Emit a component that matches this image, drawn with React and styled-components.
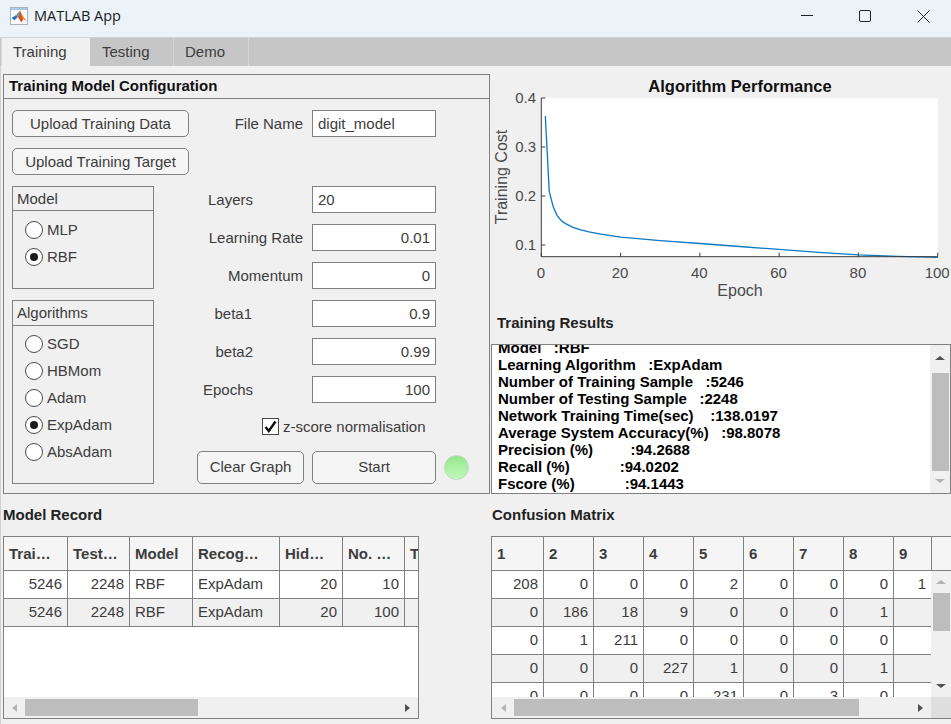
import React from 'react';
import styled, { createGlobalStyle } from 'styled-components';

const TEXT = '#3c3c3c';
const LINE = '#808080';

const GlobalStyle = createGlobalStyle`
  html, body {
    margin: 0;
    background: #f0f0f0;
    overflow: hidden;
  }
  * {
    box-sizing: border-box;
  }
`;

const Window = styled.div`
  width: 951px;
  height: 724px;
  overflow: hidden;
  display: flex;
  flex-direction: column;
  background: #f0f0f0;
  color: ${TEXT};
  font: 15px/18px 'Liberation Sans', Arial, sans-serif;
`;

const TitleBar = styled.div`
  height: 38px;
  flex: none;
  display: flex;
  align-items: center;
  padding: 0 0 5px 10px;
  background: #ecf3f8;
  border-bottom: 1px solid #d2d2d2;
`;

const AppIcon = styled.svg`
  width: 18px;
  height: 18px;
  flex: none;
`;

const AppTitle = styled.div`
  margin-left: 6px;
  flex: 1;
  color: #1a1a1a;
  font: 14.5px/18px 'Open Sans', sans-serif;
`;

const WindowButton = styled.div`
  width: 58.5px;
  height: 30px;
  display: flex;
  align-items: center;
  justify-content: center;
  &:first-of-type {
    padding-right: 2px;
  }
  &:last-child {
    margin-right: -2px;
  }
`;

const TabStrip = styled.div`
  height: 28px;
  flex: none;
  display: flex;
  background: #c6c6c6;
`;

const Tab = styled.div`
  width: ${p => p.$w}px;
  margin-left: ${p => p.$ml || 0}px;
  padding-left: ${p => p.$pl}px;
  line-height: 28px;
  background: ${p => (p.$active ? '#f0f0f0' : 'transparent')};
  border-right: ${p => (p.$active ? 'none' : '1px solid #d4d4d4')};
  border-left: ${p => (p.$active ? '1px solid #d8d8d8' : 'none')};
`;

const Content = styled.div`
  flex: 1;
  padding: 8px 0 0 3px;
  display: flex;
  flex-direction: column;
  box-shadow: inset 1px 0 #d0d0d0;
`;

const TopRow = styled.div`
  height: 420px;
  flex: none;
  display: flex;
`;

const ConfigPanel = styled.section`
  width: 487px;
  flex: none;
  border: 1px solid ${LINE};
  display: flex;
  flex-direction: column;
`;

const PanelTitle = styled.div`
  height: 24px;
  flex: none;
  padding-left: 5px;
  font-weight: bold;
  line-height: 22px;
  color: #111;
  border-bottom: 1px solid ${LINE};
`;

const ConfigBody = styled.div`
  display: flex;
  padding: 11px 0 0 8px;
`;

const LeftColumn = styled.div`
  width: 177px;
  flex: none;
  display: flex;
  flex-direction: column;
  gap: 11px;
`;

const Button = styled.div`
  width: ${p => p.$w || 177}px;
  height: ${p => p.$h || 27}px;
  padding-bottom: ${p => (p.$h ? 2 : 0)}px;
  flex: none;
  display: flex;
  align-items: center;
  justify-content: center;
  background: #f5f5f5;
  border: 1px solid ${LINE};
  border-radius: 5px;
`;

const GroupBox = styled.div`
  width: 142px;
  height: ${p => p.$h}px;
  flex: none;
  border: 1px solid ${LINE};
`;

const GroupTitle = styled.div`
  height: ${p => p.$h}px;
  padding-left: 4px;
  line-height: 23px;
  border-bottom: 1px solid ${LINE};
`;

const RadioList = styled.div`
  padding: ${p => p.$top}px 0 0 12px;
`;

const RadioRow = styled.div`
  height: 27px;
  display: flex;
  align-items: center;
  gap: 4px;
`;

const Radio = styled.span`
  width: 18px;
  height: 18px;
  flex: none;
  display: flex;
  align-items: center;
  justify-content: center;
  background: #fff;
  border: 1px solid #4a4a4a;
  border-radius: 50%;
  &::after {
    content: '';
    display: ${p => (p.$on ? 'block' : 'none')};
    width: 8px;
    height: 8px;
    border-radius: 50%;
    background: #1c1c1c;
  }
`;

const FormColumn = styled.div`
  width: 247px;
  margin-right: 8px;
  flex: none;
  display: flex;
  flex-direction: column;
  gap: 11px;
`;

const FieldRow = styled.div`
  height: 27px;
  flex: none;
  margin-bottom: ${p => p.$after || 0}px;
  display: flex;
  align-items: center;
  gap: 9px;
`;

const FieldLabel = styled.div`
  width: 114px;
  flex: none;
  text-align: right;
  padding-right: ${p => p.$inset || 0}px;
`;

const TextInput = styled.input`
  width: 124px;
  height: 27px;
  flex: none;
  padding: 0 5px;
  background: #fff;
  border: 1px solid ${LINE};
  outline: none;
  color: ${TEXT};
  font: inherit;
  text-align: ${p => (p.$num ? 'right' : 'left')};
`;

const CheckRow = styled.div`
  height: 17px;
  flex: none;
  margin: 4px 0 5px 73px;
  display: flex;
  align-items: center;
  gap: 4px;
  white-space: nowrap;
`;

const CheckBox = styled.span`
  width: 17px;
  height: 17px;
  flex: none;
  display: flex;
  align-items: center;
  justify-content: center;
  background: #fff;
  border: 1px solid #4a4a4a;
`;

const ActionRow = styled.div`
  display: flex;
  align-items: center;
  margin-left: 8px;
  gap: 8px;
`;

const Lamp = styled.div`
  width: 25px;
  height: 25px;
  flex: none;
  border-radius: 50%;
  background: linear-gradient(#8fe58a 0%, #a9f0a2 45%, #c2f8ba 100%);
  border: 1px solid #c4d6c2;
`;

const RightColumn = styled.div`
  width: 461px;
  flex: none;
  display: flex;
  flex-direction: column;
`;

const ChartSvg = styled.svg`
  width: 461px;
  height: 236px;
  flex: none;
  display: block;
  font-family: 'Liberation Sans', Arial, sans-serif;
`;

const SectionTitle = styled.div`
  height: ${p => p.$h}px;
  flex: none;
  padding-left: ${p => p.$pl || 0}px;
  padding-top: ${p => p.$pt || 0}px;
  font-weight: bold;
  color: #222;
`;

const ResultsBox = styled.div`
  margin-left: 1px;
  height: 150px;
  flex: none;
  display: flex;
  background: #fff;
  border: 1px solid ${LINE};
`;

const ResultsView = styled.div`
  flex: 1;
  overflow: hidden;
  padding-left: 6px;
`;

const ResultsText = styled.div`
  margin-top: -6px;
  color: #000;
  font-size: 15px;
  font-weight: bold;
  line-height: 17px;
  white-space: pre;
`;

const BottomRow = styled.div`
  flex: 1;
  display: flex;
`;

const TableSection = styled.section`
  width: ${p => p.$w}px;
  flex: none;
  padding-top: 12px;
`;

const TableFrame = styled.div`
  width: ${p => p.$w}px;
  height: 183px;
  display: flex;
  flex-direction: column;
  background: #fff;
  border: 1px solid ${LINE};
`;

const HeaderRow = styled.div`
  height: 34px;
  flex: none;
  display: grid;
  grid-template-columns: ${p => p.$cols};
  background: #f5f5f5;
  border-bottom: 1px solid ${LINE};
  overflow: hidden;
`;

const HeaderCell = styled.div`
  padding-left: 5px;
  line-height: 34px;
  font-weight: bold;
  white-space: nowrap;
  overflow: hidden;
  border-right: 1px solid ${LINE};
  &:last-child {
    border-right: none;
  }
`;

const TableMiddle = styled.div`
  flex: 1;
  min-height: 0;
  display: flex;
`;

const RowsView = styled.div`
  flex: 1;
  min-width: 0;
  overflow: hidden;
`;

const DataRow = styled.div`
  height: 28px;
  display: grid;
  grid-template-columns: ${p => p.$cols};
  background: ${p => (p.$odd ? '#f0f0f0' : '#fff')};
  border-bottom: 1px solid ${LINE};
`;

const DataCell = styled.div`
  padding: 0 5px;
  line-height: 26px;
  text-align: ${p => (p.$left ? 'left' : 'right')};
  white-space: nowrap;
  border-right: 1px solid ${LINE};
  &:last-child {
    border-right: none;
  }
`;

const TableFooter = styled.div`
  height: 21px;
  flex: none;
  display: flex;
`;

const HScroll = styled.div`
  flex: 1;
  display: flex;
  align-items: center;
  background: #f0f0f0;
`;

const VScroll = styled.div`
  width: 20px;
  flex: none;
  display: flex;
  flex-direction: column;
  align-items: center;
  background: #f0f0f0;
`;

const ScrollSpacer = styled.div`
  flex: 1;
`;

const ArrowSlot = styled.div`
  width: ${p => (p.$h ? '100%' : '22px')};
  height: ${p => p.$h || 17}px;
  padding-bottom: ${p => p.$lift || 0}px;
  flex: none;
  display: flex;
  align-items: center;
  justify-content: center;
`;

const Arrow = styled.span`
  width: 0;
  height: 0;
  border-style: solid;
  border-color: transparent;
  ${p => p.$dir === 'left' && `border-width: 4px 5px 4px 0; border-right-color: ${p.$color};`}
  ${p => p.$dir === 'right' && `border-width: 4px 0 4px 5px; border-left-color: ${p.$color};`}
  ${p => p.$dir === 'up' && `border-width: 0 5px 4px 5px; border-bottom-color: ${p.$color};`}
  ${p => p.$dir === 'down' && `border-width: 4px 5px 0 5px; border-top-color: ${p.$color};`}
`;

const HThumb = styled.div`
  height: 17px;
  flex: none;
  background: #bdbdbd;
`;

const VThumb = styled.div`
  width: 17px;
  flex: none;
  background: #bdbdbd;
`;

const ScrollCorner = styled.div`
  width: 20px;
  flex: none;
  background: #dfdfdf;
`;

const results = [
  'Model   :RBF',
  'Learning Algorithm   :ExpAdam',
  'Number of Training Sample   :5246',
  'Number of Testing Sample   :2248',
  'Network Training Time(sec)    :138.0197',
  'Average System Accuracy(%)   :98.8078',
  'Precision (%)         :94.2688',
  'Recall (%)            :94.0202',
  'Fscore (%)            :94.1443'
];

const fields = [
  { label: 'Layers', value: '20', inset: 50, num: false },
  { label: 'Learning Rate', value: '0.01', num: true },
  { label: 'Momentum', value: '0', num: true },
  { label: 'beta1', value: '0.9', inset: 51, num: true },
  { label: 'beta2', value: '0.99', inset: 50, num: true },
  { label: 'Epochs', value: '100', inset: 50, num: true }
];

const algorithms = ['SGD', 'HBMom', 'Adam', 'ExpAdam', 'AbsAdam'];

const RECORD_COLS = '64px 62px 63px 87px 63px 62px 1fr';
const recordHeaders = ['Trai…', 'Test…', 'Model', 'Recog…', 'Hid…', 'No. …', 'T'];
const recordRows = [
  ['5246', '2248', 'RBF', 'ExpAdam', '20', '10', ''],
  ['5246', '2248', 'RBF', 'ExpAdam', '20', '100', '']
];

const MATRIX_COLS = '52px repeat(7, 50px) 38px 1fr';
const MATRIX_ROW_COLS = '52px repeat(7, 50px) 37px';
const matrixHeaders = ['1', '2', '3', '4', '5', '6', '7', '8', '9', ''];
const matrixRows = [
  ['208', '0', '0', '0', '2', '0', '0', '0', '1'],
  ['0', '186', '18', '9', '0', '0', '0', '1', ''],
  ['0', '1', '211', '0', '0', '0', '0', '0', ''],
  ['0', '0', '0', '227', '1', '0', '0', '1', ''],
  ['0', '0', '0', '0', '231', '0', '3', '0', '']
];

// curve samples read off the plot: [epoch, cost]
const curve = [
  [1, 0.363], [1.5, 0.29], [2, 0.21], [3, 0.178], [4, 0.16], [5, 0.15], [6, 0.144], [7, 0.14],
  [8, 0.136], [10, 0.131], [12, 0.127], [15, 0.122], [20, 0.116], [30, 0.109], [40, 0.103],
  [50, 0.097], [60, 0.091], [70, 0.085], [80, 0.08], [90, 0.077], [100, 0.075]
];

// chart coordinates are relative to the svg, whose origin is at 490,74 on the page
const xOf = epoch => 51.3 + epoch * 3.964;
const yOf = cost => 24 + (0.4 - cost) * 490;
const AXIS_BOTTOM = 182.7;

const Chart = () => {
  const line = curve.map(([e, c]) => `${xOf(e).toFixed(1)},${yOf(c).toFixed(1)}`).join(' ');
  return (
    <ChartSvg viewBox="0 0 461 236">
      <rect x={xOf(0)} y={24} width={396.4} height={AXIS_BOTTOM - 24} fill="#fff" />
      <text x={250} y={18} textAnchor="middle" fontSize="16.5" fontWeight="bold" fill="#111">
        Algorithm Performance
      </text>
      <polyline points={line} fill="none" stroke="#0b78c2" strokeWidth="1.3" />
      <path
        d={`M${xOf(0)} 24V${AXIS_BOTTOM}H${xOf(100)}`}
        fill="none"
        stroke="#3a3a3a"
        strokeWidth="1"
      />
      {[0, 20, 40, 60, 80, 100].map(t => (
        <g key={t}>
          <line x1={xOf(t)} x2={xOf(t)} y1={AXIS_BOTTOM} y2={AXIS_BOTTOM - 4} stroke="#3a3a3a" />
          <text x={xOf(t) - 0.5} y={204} textAnchor="middle" fontSize="15" fill="#4a4a4a">
            {t}
          </text>
        </g>
      ))}
      {[0.1, 0.2, 0.3, 0.4].map(t => (
        <g key={t}>
          <line x1={xOf(0)} x2={xOf(0) + 4} y1={yOf(t)} y2={yOf(t)} stroke="#3a3a3a" />
          <text x={46} y={yOf(t) + 5} textAnchor="end" fontSize="15" fill="#4a4a4a">
            {t.toFixed(1)}
          </text>
        </g>
      ))}
      <text x={250} y={222} textAnchor="middle" fontSize="16" fill="#4a4a4a">
        Epoch
      </text>
      <text
        transform="translate(17 103) rotate(-90)"
        textAnchor="middle"
        fontSize="16"
        fill="#4a4a4a"
      >
        Training Cost
      </text>
    </ChartSvg>
  );
};

const MatlabLogo = () => (
  <AppIcon viewBox="0 0 18 18">
    <rect x="0.5" y="0.5" width="17" height="17" fill="#f8fafb" stroke="#a9b2ba" />
    <rect x="1" y="1" width="16" height="2" fill="#a9cbe6" />
    <path d="M1.5 11 6.2 8 8 10 4.5 13.2Z" fill="#2f78b4" />
    <path d="M6.2 8 10 3.4 8 10Z" fill="#4aa0c6" />
    <path d="M10 3.4 12.4 8.4 16.4 14 13.4 12 11.2 15.4 8 10Z" fill="#d9531e" />
    <path d="M10 3.4 12.4 8.4 16.4 14 13.6 12.2 11.4 8.2Z" fill="#f2a23a" />
  </AppIcon>
);

const HBar = ({ lead, thumb }) => (
  <HScroll>
    <ArrowSlot style={{ width: lead }}>
      <Arrow $dir="left" $color="#b4b4b4" />
    </ArrowSlot>
    <HThumb style={{ width: thumb }} />
    <ScrollSpacer />
    <ArrowSlot>
      <Arrow $dir="right" $color="#505050" />
    </ArrowSlot>
  </HScroll>
);

const VBar = ({ top, thumb, bottom, upColor, downColor, lift }) => (
  <VScroll>
    <ArrowSlot $h={top} $lift={lift}>
      <Arrow $dir="up" $color={upColor} />
    </ArrowSlot>
    <VThumb style={{ height: thumb }} />
    <ScrollSpacer />
    <ArrowSlot $h={bottom} $lift={lift}>
      <Arrow $dir="down" $color={downColor} />
    </ArrowSlot>
  </VScroll>
);

export default function App() {
  return (
    <Window>
      <GlobalStyle />
      <TitleBar>
        <MatlabLogo />
        <AppTitle>MATLAB App</AppTitle>
        <WindowButton>
          <svg width="12" height="12" viewBox="0 0 12 12">
            <path d="M0 5.5H12" stroke="#222" strokeWidth="1" />
          </svg>
        </WindowButton>
        <WindowButton>
          <svg width="12" height="12" viewBox="0 0 12 12">
            <rect x="0.5" y="0.5" width="11" height="11" rx="1.5" fill="none" stroke="#222" />
          </svg>
        </WindowButton>
        <WindowButton>
          <svg width="13" height="13" viewBox="0 0 13 13">
            <path d="M0.5 0.5 12.5 12.5M12.5 0.5 0.5 12.5" stroke="#222" strokeWidth="1" />
          </svg>
        </WindowButton>
      </TitleBar>

      <TabStrip>
        <Tab $active $ml={1} $w={89} $pl={11}>
          Training
        </Tab>
        <Tab $w={84} $pl={12}>
          Testing
        </Tab>
        <Tab $w={75} $pl={11}>
          Demo
        </Tab>
      </TabStrip>

      <Content>
        <TopRow>
          <ConfigPanel>
            <PanelTitle>Training Model Configuration</PanelTitle>
            <ConfigBody>
              <LeftColumn>
                <Button>Upload Training Data</Button>
                <Button>Upload Training Target</Button>
                <GroupBox $h={103}>
                  <GroupTitle $h={24}>Model</GroupTitle>
                  <RadioList $top={5}>
                    <RadioRow>
                      <Radio />
                      MLP
                    </RadioRow>
                    <RadioRow>
                      <Radio $on />
                      RBF
                    </RadioRow>
                  </RadioList>
                </GroupBox>
                <GroupBox $h={184}>
                  <GroupTitle $h={25}>Algorithms</GroupTitle>
                  <RadioList $top={4}>
                    {algorithms.map(name => (
                      <RadioRow key={name}>
                        <Radio $on={name === 'ExpAdam'} />
                        {name}
                      </RadioRow>
                    ))}
                  </RadioList>
                </GroupBox>
              </LeftColumn>

              <FormColumn>
                <FieldRow $after={38}>
                  <FieldLabel>File Name</FieldLabel>
                  <TextInput readOnly value="digit_model" />
                </FieldRow>
                {fields.map(f => (
                  <FieldRow key={f.label}>
                    <FieldLabel $inset={f.inset}>{f.label}</FieldLabel>
                    <TextInput readOnly $num={f.num} value={f.value} />
                  </FieldRow>
                ))}
                <CheckRow>
                  <CheckBox>
                    <svg width="13" height="13" viewBox="0 0 13 13">
                      <path d="M1.5 7 4.8 11 11.5 1.5" fill="none" stroke="#111" strokeWidth="2.4" />
                    </svg>
                  </CheckBox>
                  z-score normalisation
                </CheckRow>
                <ActionRow>
                  <Button $w={107} $h={33}>
                    Clear Graph
                  </Button>
                  <Button $w={124} $h={33}>
                    Start
                  </Button>
                  <Lamp />
                </ActionRow>
              </FormColumn>
            </ConfigBody>
          </ConfigPanel>

          <RightColumn>
            <Chart />
            <SectionTitle $h={34} $pl={7} $pt={4}>
              Training Results
            </SectionTitle>
            <ResultsBox>
              <ResultsView>
                <ResultsText>{results.join('\n')}</ResultsText>
              </ResultsView>
              <VBar top={28} thumb={98} bottom={22} lift={3} upColor="#505050" downColor="#b4b4b4" />
            </ResultsBox>
          </RightColumn>
        </TopRow>

        <BottomRow>
          <TableSection $w={488}>
            <SectionTitle $h={30}>Model Record</SectionTitle>
            <TableFrame $w={416}>
              <HeaderRow $cols={RECORD_COLS}>
                {recordHeaders.map(h => (
                  <HeaderCell key={h}>{h}</HeaderCell>
                ))}
              </HeaderRow>
              <TableMiddle>
                <RowsView>
                  {recordRows.map((row, r) => (
                    <DataRow key={r} $odd={r % 2 === 1} $cols={RECORD_COLS}>
                      {row.map((v, c) => (
                        <DataCell key={c} $left={c === 2 || c === 3}>
                          {v}
                        </DataCell>
                      ))}
                    </DataRow>
                  ))}
                </RowsView>
              </TableMiddle>
              <TableFooter>
                <HBar lead={21} thumb={173} />
              </TableFooter>
            </TableFrame>
          </TableSection>

          <TableSection $w={461}>
            <SectionTitle $h={30} $pl={1}>
              Confusion Matrix
            </SectionTitle>
            <TableFrame $w={461}>
              <HeaderRow $cols={MATRIX_COLS}>
                {matrixHeaders.map((h, i) => (
                  <HeaderCell key={i}>{h}</HeaderCell>
                ))}
              </HeaderRow>
              <TableMiddle>
                <RowsView>
                  {matrixRows.map((row, r) => (
                    <DataRow key={r} $odd={r % 2 === 1} $cols={MATRIX_ROW_COLS}>
                      {row.map((v, c) => (
                        <DataCell key={c}>{v}</DataCell>
                      ))}
                    </DataRow>
                  ))}
                </RowsView>
                <VBar top={22} thumb={38} bottom={22} upColor="#b4b4b4" downColor="#505050" />
              </TableMiddle>
              <TableFooter>
                <HBar lead={22} thumb={345} />
                <ScrollCorner />
              </TableFooter>
            </TableFrame>
          </TableSection>
        </BottomRow>
      </Content>
    </Window>
  );
}
